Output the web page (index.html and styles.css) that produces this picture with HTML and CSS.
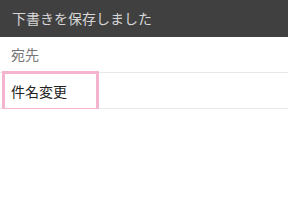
FILE: index.html
```html
<!DOCTYPE html>
<html lang="ja">
<head>
  <meta charset="UTF-8">
  <title>下書き</title>
  <link rel="stylesheet" href="styles.css">
</head>
<body>
  <!-- Toast header -->
  <div class="toast">下書きを保存しました</div>

  <!-- Mail fields -->
  <div class="field to">宛先</div>
  <div class="field subject">
    <span class="highlight">件名変更</span>
  </div>
</body>
</html>
```

FILE: styles.css
```css
body {
  margin: 0;
  font-family: "Noto Sans CJK JP", "Noto Sans", sans-serif;
  background: #fff;
}

.toast {
  height: 37px;
  line-height: 37px;
  padding-left: 12px;
  background: #404040;
  color: #d6d6d6;
  font-size: 14px;
}

.field {
  height: 35px;
  line-height: 35px;
  padding-left: 11px;
  border-bottom: 1px solid #e8e8e8;
  font-size: 14px;
  position: relative;
}

.to {
  color: #777;
}

.subject {
  color: #222;
}

/* pink selection frame over the subject */
.highlight {
  position: absolute;
  left: 2px;
  top: -2px;
  width: 85px;
  height: 34px;
  border: 3px solid #f4b3cf;
  padding-left: 6px;
  line-height: 34px;
}
```
